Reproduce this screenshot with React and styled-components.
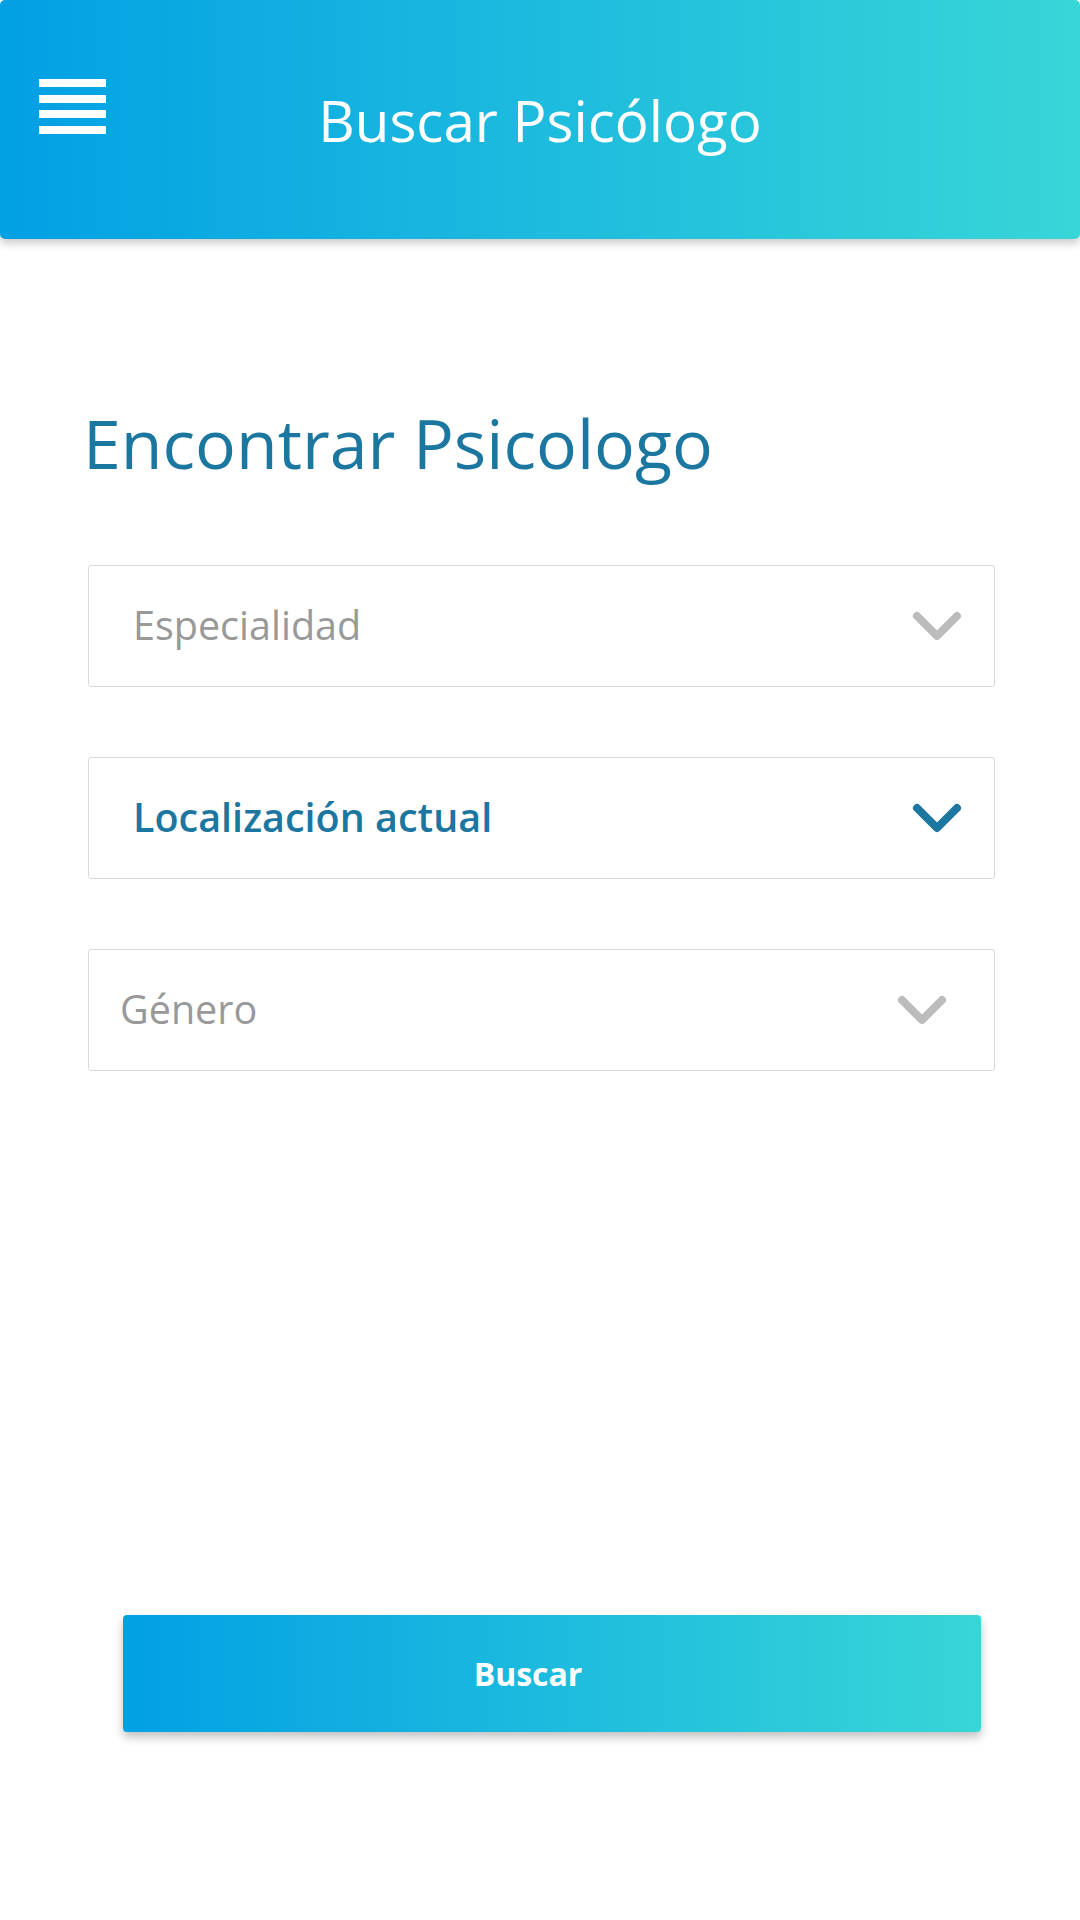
import React from "react";
import styled, { createGlobalStyle } from "styled-components";

const GlobalStyle = createGlobalStyle`
  body {
    margin: 0;
    background: #ffffff;
    font-family: "Open Sans", "Noto Sans", sans-serif;
  }
`;

const Page = styled.div`
  width: 1080px;
  min-height: 1920px;
  background: #ffffff;
`;

const Header = styled.header`
  height: 239px;
  box-sizing: border-box;
  padding: 79px 39px 0;
  display: grid;
  grid-template-columns: 1fr auto 1fr;
  align-items: start;
  background: linear-gradient(to right, #02a0e4, #38d6d7);
  border-radius: 5px;
  box-shadow: 0 4px 10px rgba(0, 0, 0, 0.22);
`;

const Burger = styled.button`
  justify-self: start;
  display: flex;
  flex-direction: column;
  gap: 7.7px;
  padding: 0;
  border: 0;
  background: none;
  cursor: pointer;

  span {
    display: block;
    width: 67px;
    height: 8px;
    background: #ffffff;
  }
`;

const Title = styled.h1`
  margin: 14px 0 0;
  font-size: 56.5px;
  line-height: 1;
  font-weight: 400;
  color: #ffffff;
  white-space: nowrap;
`;

const Main = styled.main`
  padding: 0 85px 0 88px;
  display: flex;
  flex-direction: column;
`;

const Heading = styled.h2`
  margin: 170px 0 88px -5px;
  font-size: 68px;
  line-height: 1;
  font-weight: 400;
  color: #1b76a0;
`;

const Fields = styled.div`
  display: flex;
  flex-direction: column;
  gap: 70px;
`;

const Select = styled.div`
  height: 122px;
  box-sizing: border-box;
  border: 1px solid #dadada;
  border-radius: 3px;
  display: flex;
  align-items: center;
  justify-content: space-between;
  padding: ${(p) => (p.$compact ? "0 47px 0 31px" : "0 32px 0 44px")};
  cursor: pointer;
`;

const Label = styled.span`
  font-size: 39.5px;
  line-height: 1;
  font-weight: ${(p) => (p.$active ? 600 : 400)};
  color: ${(p) => (p.$active ? "#1b76a0" : "#999999")};
`;

const Chevron = ({ color }) => (
  <svg width="50" height="30" viewBox="0 0 50 30" fill="none">
    <polyline
      points="5,5 25,25 45,5"
      stroke={color}
      strokeWidth="8"
      strokeLinecap="round"
      strokeLinejoin="round"
    />
  </svg>
);

const SearchButton = styled.button`
  margin: 544px 0 0 35px;
  width: 858px;
  height: 117px;
  border: 0;
  border-radius: 4px;
  padding: 0 48px 0 0;
  background: linear-gradient(to right, #02a0e4, #38d6d7);
  box-shadow: 0 5px 10px rgba(0, 0, 0, 0.25);
  color: #ffffff;
  font-family: "Open Sans", "Noto Sans", sans-serif;
  font-size: 32px;
  font-weight: 700;
  cursor: pointer;
`;

const fields = [
  { label: "Especialidad" },
  { label: "Localización actual", active: true },
  { label: "Género", compact: true },
];

function App() {
  return (
    <Page>
      <GlobalStyle />
      <Header>
        <Burger aria-label="Menú">
          <span />
          <span />
          <span />
          <span />
        </Burger>
        <Title>Buscar Psicólogo</Title>
        <div />
      </Header>
      <Main>
        <Heading>Encontrar Psicologo</Heading>
        <Fields>
          {fields.map((f) => (
            <Select key={f.label} $compact={f.compact}>
              <Label $active={f.active}>{f.label}</Label>
              <Chevron color={f.active ? "#1b76a0" : "#bcbcbc"} />
            </Select>
          ))}
        </Fields>
        <SearchButton>Buscar</SearchButton>
      </Main>
    </Page>
  );
}

export default App;
